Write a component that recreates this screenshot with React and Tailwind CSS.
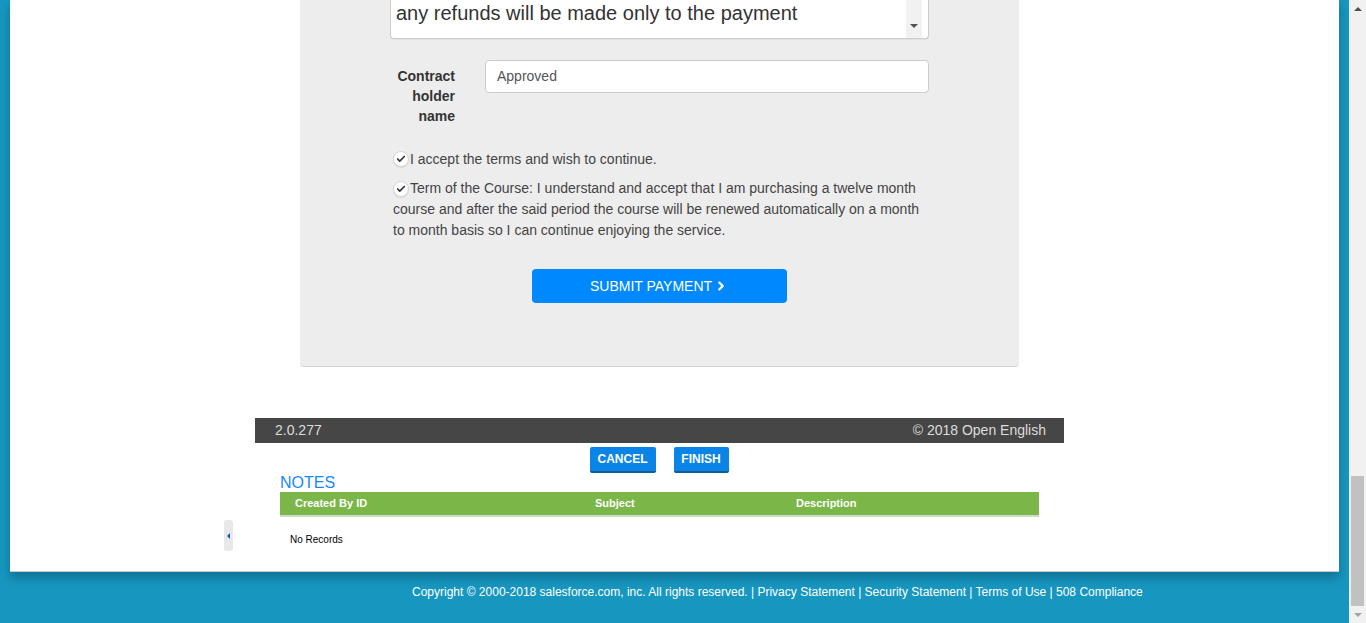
import { Check, ChevronRight } from "lucide-react";

function CheckCircle() {
  return (
    <span className="inline-flex items-center justify-center w-[16px] h-[16px] rounded-full bg-white border border-[#d6d6d6] shadow-[0_1px_1px_rgba(0,0,0,0.08)] align-middle mr-[1px] shrink-0">
      <Check className="w-[10px] h-[10px] text-[#333]" strokeWidth={4} />
    </span>
  );
}

function Scrollbar() {
  return (
    <div className="w-[17px] h-full bg-[#f1f1f1] flex flex-col items-center shrink-0">
      <div className="h-[17px] w-full flex items-center justify-center">
        <div className="w-0 h-0 border-l-[4px] border-r-[4px] border-b-[4px] border-l-transparent border-r-transparent border-b-[#505050]" />
      </div>
      <div className="flex-1 w-full flex flex-col justify-end px-[2px]">
        <div className="h-[130px] w-full bg-[#c1c1c1]" />
      </div>
      <div className="h-[17px] w-full flex items-center justify-center">
        <div className="w-0 h-0 border-l-[4px] border-r-[4px] border-t-[4px] border-l-transparent border-r-transparent border-t-[#a3a3a3]" />
      </div>
    </div>
  );
}

function PaymentPanel() {
  return (
    <div className="ml-[290px] w-[719px] h-[367px] bg-[#ededed] rounded-b-[4px] border-b border-[#d4d4d4] px-[90px]">
      <div className="h-[39px] bg-white border-x border-b border-[#cccccc] rounded-b-[4px] flex justify-between relative shadow-[0_1px_1px_rgba(0,0,0,0.05)]">
        <div className="pl-[5px] text-[20px] leading-[24px] text-[#333] mt-[1px]">
          any refunds will be made only to the payment
        </div>
        <div className="w-[16px] mr-[6px] bg-[#f1f1f1] flex items-end justify-center pb-[10px]">
          <div className="w-0 h-0 border-l-[4px] border-r-[4px] border-t-[4px] border-l-transparent border-r-transparent border-t-[#505050]" />
        </div>
      </div>

      <div className="flex mt-[21px]">
        <div className="w-[65px] pt-[6px] text-right text-[14px] leading-[20px] font-bold text-[#333]">
          <div>Contract</div>
          <div>holder</div>
          <div>name</div>
        </div>
        <div className="ml-[30px] flex-1">
          <div className="h-[33px] bg-white border border-[#cccccc] rounded-[4px] px-[11px] flex items-center text-[14px] text-[#555]">
            Approved
          </div>
        </div>
      </div>

      <div className="mt-[23px] pl-[3px] pr-[6px] text-[14px] text-[#444]">
        <div className="flex items-center leading-[20px]">
          <CheckCircle />
          <span>I accept the terms and wish to continue.</span>
        </div>
        <p className="mt-[9px] leading-[21px]">
          <CheckCircle />
          Term of the Course: I understand and accept that I am purchasing a twelve month course and after the said period the course will be renewed automatically on a month to month basis so I can continue enjoying the service.
        </p>
      </div>

      <div className="flex justify-center mt-[28px] pr-[1px]">
        <button className="w-[255px] h-[34px] bg-[#0088ff] rounded-[4px] text-white text-[14px] flex items-center justify-center gap-[2px]">
          SUBMIT PAYMENT
          <ChevronRight className="w-[14px] h-[14px]" strokeWidth={4} />
        </button>
      </div>
    </div>
  );
}

function NotesSection() {
  return (
    <div className="ml-[270px] w-[759px] relative">
      <div className="text-[16px] leading-[18px] text-[#1589ff] mt-[1px]">NOTES</div>
      <div className="h-[25px] bg-[#7ab648] border-b-2 border-[#cfd8cf] flex items-center text-[11px] font-bold text-white">
        <div className="w-[315px] pl-[15px]">Created By ID</div>
        <div className="w-[201px]">Subject</div>
        <div>Description</div>
      </div>
      <div className="pl-[10px] pt-[15px] text-[10px] text-black">No Records</div>
      <div className="absolute left-[-56px] top-[46px] w-[9px] h-[31px] bg-[#e8e8e8] rounded-[3px] flex items-center justify-center">
        <div className="w-0 h-0 border-t-[3px] border-b-[3px] border-r-[3px] border-t-transparent border-b-transparent border-r-[#1a5aa8]" />
      </div>
    </div>
  );
}

export default function App() {
  return (
    <div className="w-[1366px] h-[623px] flex bg-[#1797c0] overflow-hidden" style={{ fontFamily: '"Liberation Sans", Arial, sans-serif' }}>
      <div className="flex-1 flex flex-col">
        <div className="mx-[10px] h-[572px] bg-white border-b border-[#c8c8c8] shadow-[0_6px_10px_rgba(0,40,60,0.35)] relative z-10">
          <PaymentPanel />

          <div className="ml-[245px] w-[809px] h-[25px] mt-[51px] bg-[#464646] flex items-center justify-between pl-[20px] pr-[18px] text-[14px] text-[#dddddd]">
            <span>2.0.277</span>
            <span>© 2018 Open English</span>
          </div>

          <div className="flex justify-center gap-[18px] mt-[4px] -ml-[31px]">
            <button className="h-[26px] w-[66px] bg-[#0a84e6] border-b-2 border-[#0b5e96] rounded-[2px] text-white text-[12px] font-bold">
              CANCEL
            </button>
            <button className="h-[26px] w-[55px] bg-[#0a84e6] border-b-2 border-[#0b5e96] rounded-[2px] text-white text-[12px] font-bold">
              FINISH
            </button>
          </div>

          <NotesSection />
        </div>
        <div className="flex-1 flex items-center pl-[412px] pb-[12px] text-[12px] text-white">
          Copyright © 2000-2018 salesforce.com, inc. All rights reserved. | Privacy Statement | Security Statement | Terms of Use | 508 Compliance
        </div>
      </div>
      <Scrollbar />
    </div>
  );
}
